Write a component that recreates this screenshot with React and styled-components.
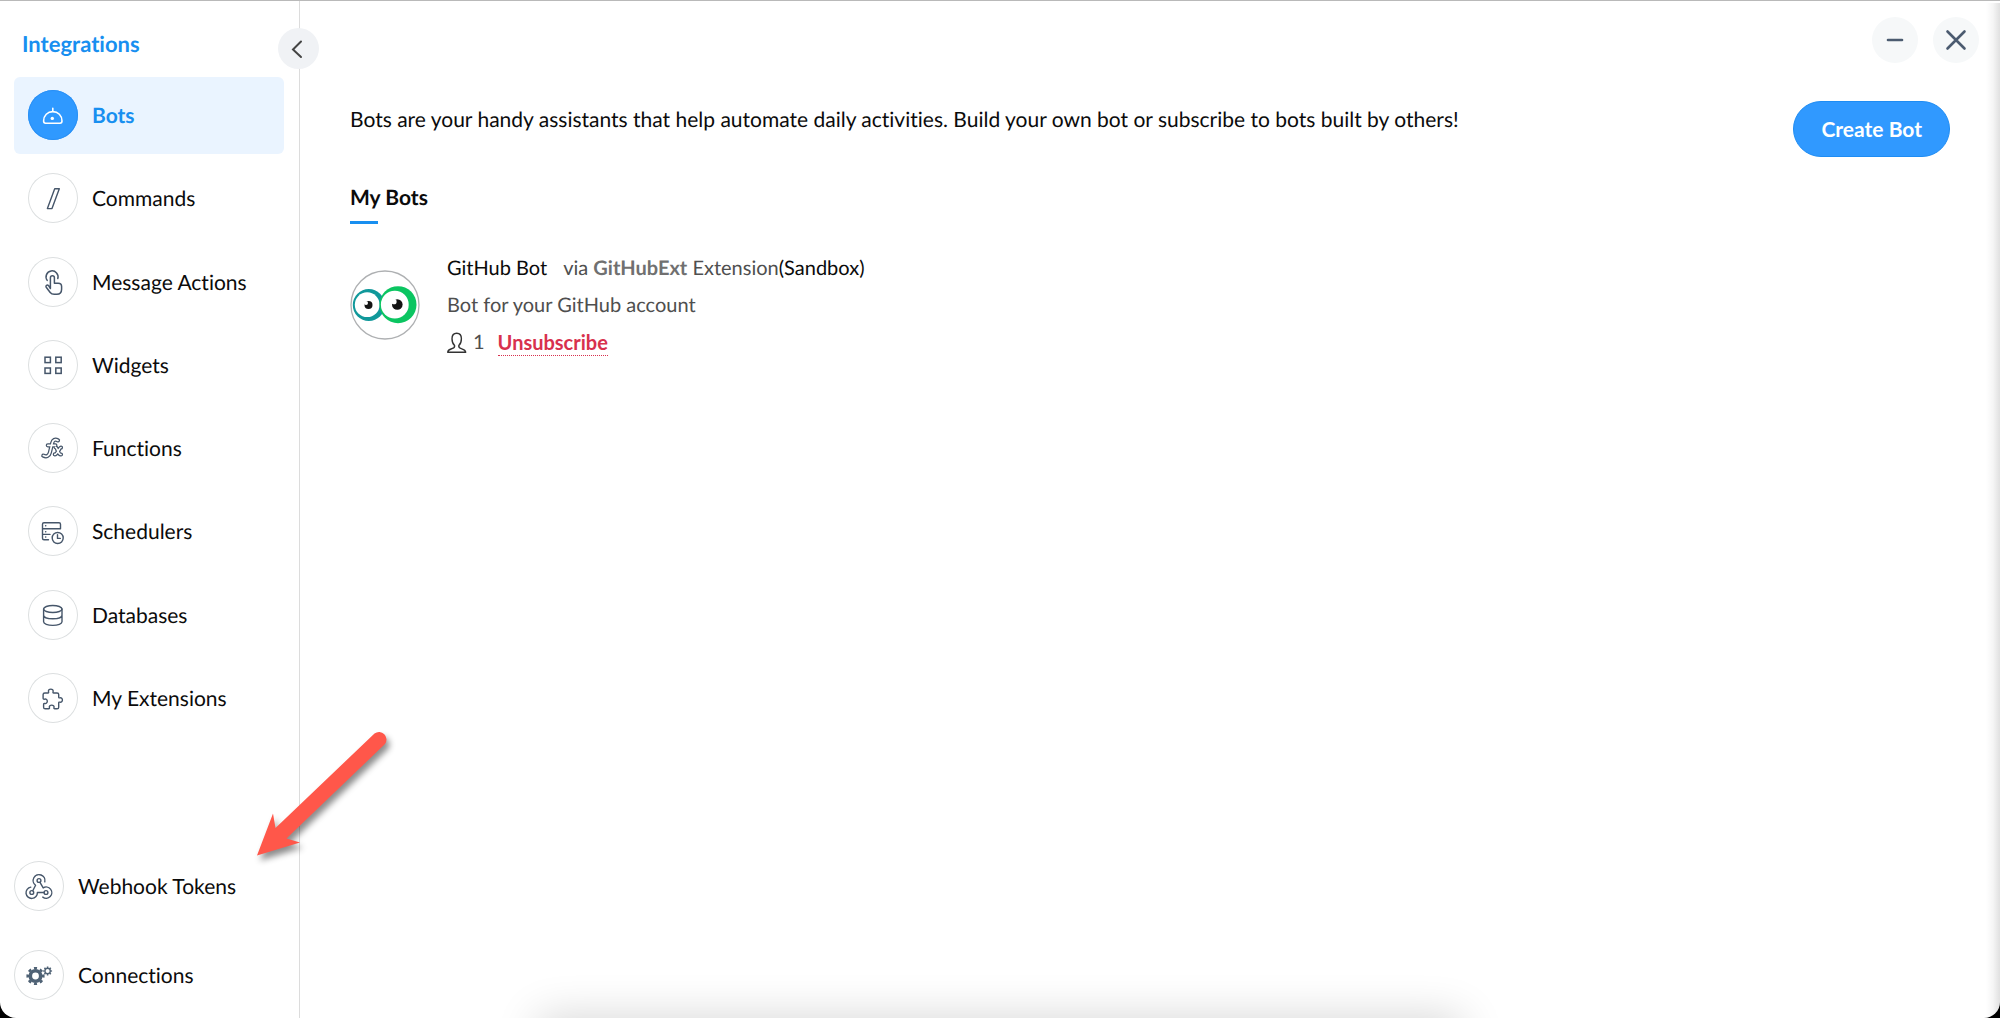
import React from "react";
import styled, { createGlobalStyle } from "styled-components";

const GlobalStyle = createGlobalStyle`
  * { box-sizing: border-box; }
  body {
    margin: 0;
    background: #000;
    font-family: Lato, "Liberation Sans", sans-serif;
    font-size: 21px;
    line-height: 26px;
    font-variant-ligatures: none;
    text-rendering: geometricPrecision;
    color: #0b0b0b;
  }
  button, a { font: inherit; color: inherit; text-decoration: none; }
  button { cursor: pointer; padding: 0; }
  h1, h2, h3, p, ul { margin: 0; padding: 0; font-size: inherit; font-weight: inherit; }
`;

const Shell = styled.div`
  position: relative;
  display: grid;
  grid-template-columns: 300px 1fr;
  min-height: 100vh;
  overflow: hidden;
  background: #fff;
  border-top: 1px solid #b9b9b9;
  border-radius: 0 0 16px 16px;
`;

const Sidebar = styled.aside`
  position: relative;
  display: flex;
  flex-direction: column;
  padding: 30px 15px 18px 14px;
  border-right: 1px solid #dcdcdc;
`;

const SidebarTitle = styled.h1`
  padding-left: 8px;
  margin-bottom: 20px;
  font-size: 22px;
  font-weight: 700;
  color: #188ff0;
`;

const CollapseButton = styled.button`
  position: absolute;
  top: 27px;
  right: -20px;
  display: grid;
  place-items: center;
  width: 41px;
  height: 41px;
  border: 0;
  border-radius: 50%;
  background: #f0f2f5;
`;

const NavList = styled.ul`
  display: flex;
  flex: 1;
  flex-direction: column;
  justify-content: space-between;
  max-height: 660px;
  list-style: none;
`;

const FooterList = styled.ul`
  display: grid;
  gap: 39px;
  margin-top: auto;
  list-style: none;
`;

const NavLink = styled.a`
  display: flex;
  align-items: center;
  gap: 14px;
  padding: ${(p) => (p.$flush ? "0" : "13px 14px 14px")};
  border-radius: 6px;
  background: ${(p) => (p.$active ? "#eaf4ff" : "transparent")};
  && {
    color: ${(p) => (p.$active ? "#188ff0" : "#0b0b0b")};
    font-weight: ${(p) => (p.$active ? 700 : 400)};
  }
`;

const NavLabel = styled.span`
  padding-top: 2px;
`;

const IconCircle = styled.span`
  display: block;
  flex: none;
  width: 50px;
  height: 50px;
  border-radius: 50%;
  color: ${(p) => (p.$active ? "#fff" : "#46566a")};
  background: ${(p) => (p.$active ? "#2f99ff" : "#fff")};
  box-shadow: inset 0 0 0 1px ${(p) => (p.$active ? "#2a90f5" : "#dcdfe0")};
  svg { display: block; }
`;

const Main = styled.main`
  min-width: 0;
  padding: 16px 50px 40px;
`;

const WindowBar = styled.div`
  display: flex;
  justify-content: flex-end;
  gap: 15px;
  margin-right: -29px;
`;

const WindowButton = styled.button`
  display: grid;
  place-items: center;
  width: 46px;
  height: 46px;
  border: 0;
  border-radius: 50%;
  background: #f6f8f9;
`;

const Intro = styled.div`
  display: flex;
  align-items: flex-start;
  justify-content: space-between;
  gap: 40px;
  margin-top: 38px;
  p { padding-top: 6px; }
`;

const CreateButton = styled.button`
  flex: none;
  height: 56px;
  padding: 0 27px;
  border: 1px solid #1e8cf3;
  border-radius: 28px;
  background: #3099ff;
  && {
    color: #fff;
    font-weight: 700;
  }
`;

const SectionTitle = styled.h2`
  margin-top: 28px;
  font-weight: 700;
  &::after {
    content: "";
    display: block;
    width: 28px;
    height: 3px;
    margin-top: 10px;
    background: #188ff0;
  }
`;

const BotCard = styled.article`
  display: flex;
  align-items: center;
  gap: 27px;
  margin-top: 24px;
`;

const Avatar = styled.div`
  flex: none;
  width: 70px;
  height: 70px;
  svg { display: block; }
`;

const BotInfo = styled.div`
  padding-top: 2px;
  line-height: 37px;
  font-size: 20px;
  color: #4f4f4f;
`;

const BotHeading = styled.div`
  display: flex;
  h3 { margin-right: 16px; color: #0b0b0b; }
  strong { color: #707070; }
  span { color: #0b0b0b; }
`;

const BotMeta = styled.div`
  display: flex;
  align-items: center;
  svg { margin-right: 6px; }
`;

const Unsubscribe = styled.button`
  height: 26px;
  margin-left: 13px;
  border: 0;
  border-bottom: 1px dotted #d8314e;
  background: none;
  && {
    color: #d8314e;
    font-weight: 700;
    line-height: 24px;
  }
`;

const RightShade = styled.div`
  position: absolute;
  top: 2px;
  right: 0;
  bottom: 0;
  width: 14px;
  pointer-events: none;
  background: linear-gradient(to right, rgba(0, 0, 0, 0), rgba(0, 0, 0, 0.04) 50%, rgba(0, 0, 0, 0.12));
`;

const DockShade = styled.div`
  position: absolute;
  top: 100%;
  left: 27%;
  right: 27%;
  height: 60px;
  pointer-events: none;
  box-shadow: 0 0 44px 2px rgba(0, 0, 0, 0.16);
`;

const Pointer = styled.svg`
  position: absolute;
  top: 719px;
  left: 244px;
  pointer-events: none;
  filter: drop-shadow(3px 5px 3px rgba(0, 0, 0, 0.45));
`;

const Glyph = ({ children, width = 1.4 }) => (
  <svg
    width="50"
    height="50"
    viewBox="0 0 50 50"
    fill="none"
    stroke="currentColor"
    strokeWidth={width}
    strokeLinecap="round"
    strokeLinejoin="round"
    aria-hidden="true"
  >
    {children}
  </svg>
);

const BotIcon = () => (
  <Glyph width={1.6}>
    <path d="M15.6 31c0-5.6 4-9.4 9.2-9.4s9.2 3.8 9.2 9.4c0 1.400-.7 2.200-2 2.200H17.600c-1.300 0-2-.8-2-2.200zM24.800 21.400v-3.200" />
    <circle cx="24.300" cy="28.400" r="1.700" fill="currentColor" stroke="none" />
  </Glyph>
);

const CommandIcon = () => (
  <Glyph>
    <path d="M26.700 15.800h4.600L24 35.600h-4.600z" />
  </Glyph>
);

const TouchIcon = () => (
  <Glyph width={1.5}>
    <path d="M19.200 23.400a6 6 0 1 1 10.600-1.800" />
    <path d="M22.400 31.500V20.700a2 2 0 0 1 4 0v5.600h3.800c2.200 0 3.400 1.200 3.400 3.200v2.800c0 3.200-1.800 5-4.800 5h-2.600c-1.800 0-3-.5-4-1.800l-4-5.300c-.9-1.300 1-3.100 2.400-1.500z" />
  </Glyph>
);

const WidgetIcon = () => (
  <Glyph width={1.5}>
    {[17, 27.8].map((x) =>
      [17.200, 28].map((y) => <rect key={`${x}-${y}`} x={x} y={y} width="5.400" height="5.400" strokeLinejoin="miter" />)
    )}
  </Glyph>
);

const fxStrokes = "M30 17.400C27 15.700 24.900 17 24.200 20L21.900 29.500C21.100 33 18.500 34.200 15.300 32.600M19.800 22.300H27.400M27.600 24.300C29.500 24.300 29.800 31.800 33 31.500M33 24.500C31.500 24.300 29.200 31.600 26.800 31.400";
const FunctionIcon = () => (
  <Glyph>
    <path d={fxStrokes} strokeWidth="4.200" />
    <path d={fxStrokes} stroke="#fff" strokeWidth="1.700" />
  </Glyph>
);

const SchedulerIcon = () => (
  <Glyph>
    <path d="M16 16.700h15c1 0 1.500.5 1.500 1.500v4.600h-18v-4.600c0-1 .5-1.500 1.500-1.500zM14.500 22.800v9.400c0 1 .5 1.500 1.500 1.500h4.500M14.500 28.400H22" />
    <path d="M17.600 19.800h.2M17.600 25.700h.2M17.600 31h.2" />
    <circle cx="29.700" cy="32" r="5.500" />
    <path d="M29.500 28.800v3.600h2.800" />
  </Glyph>
);

const DatabaseIcon = () => (
  <Glyph>
    <ellipse cx="24.800" cy="19" rx="9.200" ry="3.500" />
    <path d="M15.600 19v12.800c0 2 4 3.600 9.200 3.600s9.200-1.600 9.200-3.600V19M15.600 25.300c0 2 4 3.500 9.200 3.500s9.200-1.500 9.200-3.500" />
  </Glyph>
);

const ExtensionIcon = () => (
  <Glyph>
    <path d="M16.900 20h3c.9 0 .8-.7.6-1.400-.4-1.400.8-2.500 2.300-2.500s2.700 1.100 2.300 2.500c-.2.700-.3 1.400.6 1.400h3.400c1 0 1.600.6 1.600 1.600v2.400c0 .9.600 1 1.300.8 1.300-.4 2.400.8 2.400 2.200s-1.100 2.600-2.400 2.200c-.7-.2-1.300-.1-1.300.8v4.200c0 1-.6 1.600-1.600 1.600h-2.300c-.9 0-1-.6-.8-1.300.4-1.300-.9-2.400-2.300-2.400s-2.700 1.100-2.300 2.400c.2.700.1 1.300-.8 1.300h-3.400c-1 0-1.600-.6-1.600-1.600v-2.800c0-.9.500-1.100 1.200-.9 1.300.4 2.500-.8 2.500-2.200s-1.200-2.600-2.500-2.200c-.7.2-1.700.1-1.700-.8v-3.700c0-1 .7-1.600 1.800-1.600z" />
  </Glyph>
);

const WebhookIcon = () => (
  <Glyph>
    <circle cx="25" cy="19.500" r="1.900" />
    <circle cx="17.800" cy="31.500" r="1.900" />
    <circle cx="32" cy="31.500" r="1.900" />
    <path d="M30.800 20.800a5.900 5.900 0 1 0-9.200 3.500L18.800 29.700M26 21.300l3.200 5.600a5.600 5.600 0 1 1-.4 9.200M30 31.500h-6.600a5.700 5.700 0 1 1-6.600-5.400" />
  </Glyph>
);

const GearIcon = () => (
  <Glyph>
    <g strokeLinecap="butt" fill="none" stroke="#4f6275">
      <circle cx="21.500" cy="26" r="5.200" strokeWidth="3.600" />
      <circle cx="21.500" cy="26" r="7.800" strokeWidth="2.600" pathLength="32" strokeDasharray="2 2" strokeDashoffset="1" />
      <circle cx="33.600" cy="21" r="2.700" strokeWidth="1.400" />
      <circle cx="33.600" cy="21" r="3.800" strokeWidth="1.400" pathLength="32" strokeDasharray="2 2" strokeDashoffset="1" />
    </g>
  </Glyph>
);

const EyesAvatar = () => (
  <svg width="70" height="70" viewBox="0 0 70 70" role="img" aria-label="GitHub Bot">
    <circle cx="35" cy="35" r="34" fill="#fff" stroke="#aeb0b2" strokeWidth="1.300" />
    <circle cx="18.800" cy="35" r="16" fill="#10989a" />
    <circle cx="17.200" cy="34.700" r="12.400" fill="#fff" />
    <circle cx="48" cy="34.700" r="18.500" fill="#0bc561" />
    <circle cx="44.800" cy="34.700" r="13.900" fill="#fff" />
    <circle cx="18.500" cy="35" r="4" fill="#141414" />
    <circle cx="16" cy="33" r="2" fill="#fff" />
    <circle cx="47.300" cy="34.500" r="5.300" fill="#141414" />
    <circle cx="44" cy="31.700" r="2.600" fill="#fff" />
  </svg>
);

const PersonIcon = () => (
  <svg width="20" height="22" viewBox="0 0 20 22" fill="none" stroke="#333" strokeWidth="1.400" strokeLinejoin="round" aria-hidden="true">
    <path d="M7.600 13.600C5.900 12 5 9.500 5 6.700 5 3.300 6.800 1.300 9.700 1.300s4.700 2 4.700 5.400c0 2.800-.9 5.300-2.600 6.900-.4 2 .5 2.500 3 3.200 2.700.7 3.700 1.400 3.900 3.500H.7c.2-2.100 1.200-2.800 3.900-3.500 2.500-.7 3.400-1.200 3-3.200z" />
  </svg>
);

const navItems = [
  { label: "Bots", Icon: BotIcon, active: true },
  { label: "Commands", Icon: CommandIcon },
  { label: "Message Actions", Icon: TouchIcon },
  { label: "Widgets", Icon: WidgetIcon },
  { label: "Functions", Icon: FunctionIcon },
  { label: "Schedulers", Icon: SchedulerIcon },
  { label: "Databases", Icon: DatabaseIcon },
  { label: "My Extensions", Icon: ExtensionIcon },
];

const footerItems = [
  { label: "Webhook Tokens", Icon: WebhookIcon },
  { label: "Connections", Icon: GearIcon },
];

const NavItem = ({ label, Icon, active, flush }) => (
  <li>
    <NavLink href="#" $active={active} $flush={flush} aria-current={active ? "page" : undefined}>
      <IconCircle $active={active}>
        <Icon />
      </IconCircle>
      <NavLabel>{label}</NavLabel>
    </NavLink>
  </li>
);

export default function App() {
  return (
    <>
      <GlobalStyle />
      <Shell>
        <Sidebar>
          <SidebarTitle>Integrations</SidebarTitle>
          <NavList>
            {navItems.map((item) => (
              <NavItem key={item.label} {...item} />
            ))}
          </NavList>
          <FooterList>
            {footerItems.map((item) => (
              <NavItem key={item.label} {...item} flush />
            ))}
          </FooterList>
          <CollapseButton aria-label="Collapse sidebar">
            <svg width="20" height="20" viewBox="0 0 20 20" fill="none" stroke="#444" strokeWidth="2" strokeLinecap="round" aria-hidden="true">
              <path d="M12 2.500L4 10.500L12 18" />
            </svg>
          </CollapseButton>
        </Sidebar>
        <Main>
          <WindowBar>
            <WindowButton aria-label="Minimize">
              <svg width="22" height="22" viewBox="0 0 22 22" stroke="#4b5b70" strokeWidth="2.600" strokeLinecap="round" aria-hidden="true">
                <path d="M4 11h14" />
              </svg>
            </WindowButton>
            <WindowButton aria-label="Close">
              <svg width="22" height="22" viewBox="0 0 22 22" stroke="#4b5b70" strokeWidth="2.600" strokeLinecap="round" aria-hidden="true">
                <path d="M2.500 2.500l17 17M19.500 2.500l-17 17" />
              </svg>
            </WindowButton>
          </WindowBar>
          <Intro>
            <p>
              Bots are your handy assistants that help automate daily activities. Build your own bot or subscribe to bots built by others!
            </p>
            <CreateButton>Create Bot</CreateButton>
          </Intro>
          <SectionTitle>My Bots</SectionTitle>
          <BotCard>
            <Avatar>
              <EyesAvatar />
            </Avatar>
            <BotInfo>
              <BotHeading>
                <h3>GitHub Bot</h3>
                <p>
                  via <strong>GitHubExt</strong> Extension<span>(Sandbox)</span>
                </p>
              </BotHeading>
              <p>Bot for your GitHub account</p>
              <BotMeta>
                <PersonIcon />1<Unsubscribe>Unsubscribe</Unsubscribe>
              </BotMeta>
            </BotInfo>
          </BotCard>
        </Main>
        <RightShade />
        <DockShade />
        <Pointer width="160" height="150" viewBox="244 720 160 150" aria-hidden="true">
          <path
            fill="#ff574a"
            d="M257 855.500L273 813.500L275.500 828L374.500 733.500A7.500 7.500 0 0 1 385 744L286.500 838.500L300 842.500Z"
          />
        </Pointer>
      </Shell>
    </>
  );
}
